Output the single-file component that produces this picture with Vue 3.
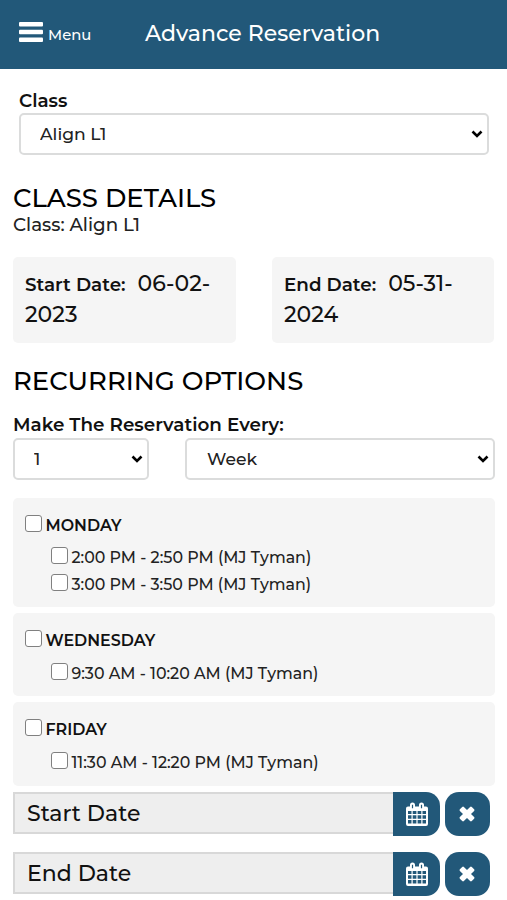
<script setup>
import { ref } from 'vue'

const selectedClass = ref('Align L1')
const interval = ref('1')
const unit = ref('Week')

const dates = [
  { id: 'start', label: 'Start Date:', first: '06-02-', second: '2023' },
  { id: 'end', label: 'End Date:', first: '05-31-', second: '2024' },
]

const days = ref([
  {
    id: 'monday',
    name: 'MONDAY',
    checked: false,
    slots: [
      { id: 'm1', text: '2:00 PM - 2:50 PM (MJ Tyman)', checked: false },
      { id: 'm2', text: '3:00 PM - 3:50 PM (MJ Tyman)', checked: false },
    ],
  },
  {
    id: 'wednesday',
    name: 'WEDNESDAY',
    checked: false,
    slots: [{ id: 'w1', text: '9:30 AM - 10:20 AM (MJ Tyman)', checked: false }],
  },
  {
    id: 'friday',
    name: 'FRIDAY',
    checked: false,
    slots: [{ id: 'f1', text: '11:30 AM - 12:20 PM (MJ Tyman)', checked: false }],
  },
])

const pickers = [
  { id: 'pick-start', label: 'Start Date' },
  { id: 'pick-end', label: 'End Date' },
]
</script>

<template>
  <div class="page">
    <header class="topbar">
      <button class="menu" type="button">
        <svg class="bars" viewBox="0 0 24 20">
          <rect x="0" y="0" width="24" height="4.4" rx="1" />
          <rect x="0" y="7.8" width="24" height="4.4" rx="1" />
          <rect x="0" y="15.6" width="24" height="4.4" rx="1" />
        </svg>
        <span class="menu-text">Menu</span>
      </button>
      <h1 class="title">Advance Reservation</h1>
    </header>

    <section class="class-field">
      <label class="label class-label" for="class-select">Class</label>
      <div class="select">
        <select id="class-select" v-model="selectedClass"><option>Align L1</option></select>
        <svg class="chevron" viewBox="0 0 12 8"><path d="M1.500 1.500 6 6l4.500-4.500" /></svg>
      </div>
    </section>

    <main class="content">
      <h2 class="heading details">CLASS DETAILS</h2>
      <p class="class-name">Class: Align L1</p>

      <div class="dates">
        <div v-for="d in dates" :key="d.id" class="date-box">
          <div class="date-line"><strong class="label">{{ d.label }}</strong><span class="value">{{ d.first }}</span></div>
          <div class="date-line"><span>{{ d.second }}</span></div>
        </div>
      </div>

      <h2 class="heading recurring">RECURRING OPTIONS</h2>
      <div class="label every">Make The Reservation Every:</div>
      <div class="repeat">
        <div class="select">
          <select v-model="interval"><option>1</option></select>
          <svg class="chevron" viewBox="0 0 12 8"><path d="M1.500 1.500 6 6l4.500-4.500" /></svg>
        </div>
        <div class="select">
          <select v-model="unit" class="week"><option>Week</option></select>
          <svg class="chevron" viewBox="0 0 12 8"><path d="M1.500 1.500 6 6l4.500-4.500" /></svg>
        </div>
      </div>

      <div class="days">
        <div v-for="day in days" :key="day.id" class="day" :class="day.id">
          <label class="check">
            <input v-model="day.checked" type="checkbox" />
            <span class="day-name">{{ day.name }}</span>
          </label>
          <div class="slots">
            <label v-for="slot in day.slots" :key="slot.id" class="check">
              <input v-model="slot.checked" type="checkbox" />
              <span class="slot-text">{{ slot.text }}</span>
            </label>
          </div>
        </div>
      </div>

      <div class="pickers">
        <div v-for="p in pickers" :key="p.id" class="picker">
          <div class="picker-input"><span>{{ p.label }}</span></div>
          <button class="btn calendar" type="button">
            <svg viewBox="0 0 22 24">
              <path
                fill-rule="evenodd"
                d="M2 4.500H4V3a2.500 2.500 0 0 1 5 0v1.500h4V3a2.500 2.500 0 0 1 5 0v1.500h2a2 2 0 0 1 2 2V22a2 2 0 0 1-2 2H2a2 2 0 0 1-2-2V6.500a2 2 0 0 1 2-2ZM5.900 2.700v3.500h1.200V2.700ZM14.900 2.700v3.500h1.200V2.700ZM2 9v3h3.500V9ZM6.700 9v3h3.700V9ZM11.600 9v3h3.700V9ZM16.500 9v3H20V9ZM2 13.200v3.600h3.500v-3.600ZM6.700 13.200v3.600h3.700v-3.600ZM11.600 13.200v3.600h3.700v-3.600ZM16.500 13.200v3.600H20v-3.600ZM2 18v3.500h3.500V18ZM6.700 18v3.500h3.700V18ZM11.600 18v3.500h3.700V18ZM16.500 18v3.500H20V18Z"
              />
            </svg>
          </button>
          <button class="btn clear" type="button">
            <svg viewBox="0 0 16 16">
              <path
                d="M3.200.9a1.200 1.200 0 0 1 1.700 0L8 4 11.100.9a1.200 1.200 0 0 1 1.700 0l2.300 2.300a1.200 1.200 0 0 1 0 1.700L12 8l3.100 3.100a1.200 1.200 0 0 1 0 1.700l-2.300 2.300a1.200 1.200 0 0 1-1.700 0L8 12l-3.100 3.100a1.200 1.200 0 0 1-1.700 0L.9 12.800a1.200 1.200 0 0 1 0-1.700L4 8 .9 4.900a1.200 1.200 0 0 1 0-1.700Z"
              />
            </svg>
          </button>
        </div>
      </div>
    </main>
  </div>
</template>

<style>
body {
  margin: 0;
  background: #fff;
}
</style>

<style scoped>
.page {
  width: 507px;
  height: 900px;
  overflow: hidden;
  background: #fff;
  color: #111;
  font-family: Montserrat, Inter, sans-serif;
  font-weight: 500;
  white-space: nowrap;
}
.page * {
  box-sizing: border-box;
}
h1,
h2,
p {
  margin: 0;
}
button {
  border: 0;
  padding: 0;
  font: inherit;
}
.topbar {
  display: flex;
  height: 69px;
  background: #225879;
  color: #fff;
}
.menu {
  display: flex;
  width: 145px;
  height: 69px;
  padding: 21.500px 0 0 19px;
  background: none;
  color: #fff;
}
.bars {
  width: 24px;
  height: 20px;
  fill: #fff;
}
.menu-text {
  margin: 3.500px 0 0 5px;
  font-size: 14.800px;
  line-height: 20px;
}
.title {
  font-size: 22px;
  font-weight: 500;
  line-height: 67px;
}
.class-field {
  padding: 22px 18px 0 19px;
}
.label {
  font-size: 18.350px;
  font-weight: 600;
}
.class-label {
  display: block;
  height: 22px;
  line-height: 20px;
}
.select {
  display: grid;
  align-items: center;
  height: 42px;
}
.select select,
.select .chevron {
  grid-area: 1 / 1;
}
select {
  width: 100%;
  height: 100%;
  padding: 0 19px 2px;
  appearance: none;
  border: 2px solid #dbdcdc;
  border-radius: 5px;
  background: #fff;
  color: #222;
  font-family: inherit;
  font-size: 17.200px;
  font-weight: 500;
}
.week {
  padding-left: 20px;
}
.chevron {
  justify-self: end;
  width: 12px;
  height: 8px;
  margin-right: 6px;
  fill: none;
  stroke: #000;
  stroke-width: 2.600;
  pointer-events: none;
}
.content {
  padding: 28px 12px 0 13px;
}
.heading {
  height: 30px;
  color: #000;
  font-size: 25.900px;
  font-weight: 500;
  line-height: 30px;
}
.class-name {
  height: 24px;
  color: #222;
  font-size: 18.300px;
  line-height: 24px;
}
.dates {
  display: grid;
  grid-template-columns: 223px 222px;
  gap: 36px;
  margin-top: 20px;
}
.date-box {
  height: 86px;
  padding: 11px 12px;
  border-radius: 5px;
  background: #f5f5f5;
}
.date-line {
  height: 31px;
  font-size: 22px;
  line-height: 31px;
}
.value {
  margin-left: 12px;
}
.recurring {
  margin-top: 23px;
}
.every {
  height: 22px;
  margin-top: 20px;
  line-height: 18px;
}
.repeat {
  display: grid;
  grid-template-columns: 136px 310px;
  gap: 36px;
}
.days {
  display: grid;
  gap: 6px;
  margin-top: 18px;
}
.day {
  height: 83px;
  padding: 17px 12px 0;
  border-radius: 5px;
  background: #f5f5f5;
}
.monday {
  height: 109px;
}
.friday {
  height: 84px;
}
.check {
  display: flex;
  height: 16px;
}
.check input {
  flex: none;
  width: 16.500px;
  height: 16.500px;
  margin: 0;
  appearance: none;
  border: 1px solid #808080;
  border-radius: 3px;
  background: #fff;
}
.check span {
  margin-top: 3px;
  line-height: 16px;
}
.day-name {
  margin-left: 4px;
  font-size: 15.900px;
  font-weight: 600;
}
.slots {
  display: grid;
  gap: 11px;
  margin: 16px 0 0 26px;
}
.wednesday .slots,
.friday .slots {
  margin-top: 17px;
}
.slot-text {
  margin-left: 4px;
  color: #222;
  font-size: 15.850px;
}
.pickers {
  display: grid;
  gap: 16px;
  margin-top: 6px;
}
.picker {
  display: flex;
  height: 44px;
}
.picker-input {
  width: 380px;
  height: 42px;
  padding-left: 12px;
  border: 2px solid #d8d8d8;
  border-right: 0;
  background: #eee;
  font-size: 22px;
  line-height: 40px;
}
.btn {
  display: grid;
  place-items: center;
  width: 47px;
  height: 44px;
  background: #225879;
}
.calendar {
  border-radius: 0 14px 14px 0;
}
.calendar svg {
  width: 22px;
  height: 24px;
  margin: 0 0 1px 1px;
  fill: #fff;
}
.clear {
  width: 45px;
  margin-left: 5px;
  border-radius: 14px;
}
.clear svg {
  width: 16px;
  height: 16px;
  margin-right: 1px;
  fill: #fff;
}
</style>
